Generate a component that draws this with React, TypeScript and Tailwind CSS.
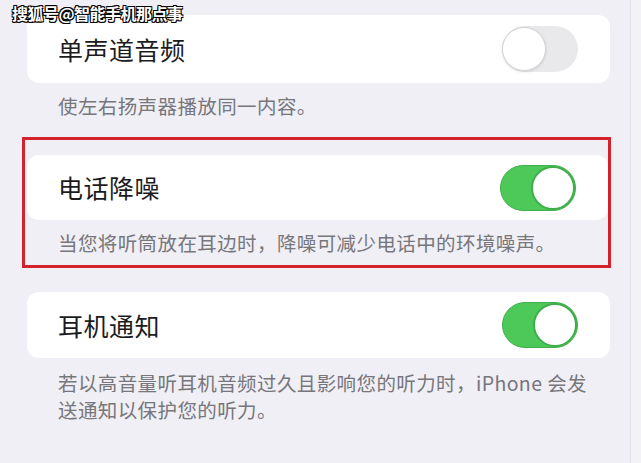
const Toggle = ({ on }: { on: boolean }) => (
  <div
    className={`relative h-[46px] w-[76px] shrink-0 rounded-full ${
      on ? "border border-[#3fae4a] bg-[#4dc95a]" : "bg-[#e9e9ec]"
    }`}
  >
    <div
      className={`absolute top-[0px] h-[44px] w-[44px] rounded-full bg-white ${
        on
          ? "right-[0px] border-2 border-[#3fae4a]"
          : "left-0 top-[1px] border border-[#d4d4d8] shadow-[0_1px_3px_rgba(0,0,0,0.12)]"
      }`}
    />
  </div>
);

const SettingCard = ({
  title,
  on,
  height,
}: {
  title: string;
  on: boolean;
  height: string;
}) => (
  <div
    className={`flex ${height} w-full items-center justify-between rounded-[12px] bg-white pl-[31px] pr-[32px]`}
  >
    <p className="text-[25px] leading-none tracking-[0.5px] text-[#1c1c1e]">
      {title}
    </p>
    <Toggle on={on} />
  </div>
);

const App = () => {
  return (
    <div className="relative flex h-[463px] w-[641px] overflow-hidden bg-[#f0eff5] font-['Noto_Sans_CJK_SC','Noto_Sans',sans-serif]">
      {/* watermark */}
      <p className="absolute left-[12px] top-[1px] text-[16px] font-bold tracking-[-0.5px] text-white [text-shadow:1px_1px_0_#000,-1px_-1px_0_#000,1px_-1px_0_#000,-1px_1px_0_#000,0_1px_0_#000,0_-1px_0_#000]">
        搜狐号@智能手机那点事
      </p>

      <div className="w-[630px] shrink-0 pt-[15px]">
        {/* mono audio */}
        <div className="ml-[27px] w-[583px]">
          <SettingCard title="单声道音频" on={false} height="h-[68px]" />
          <p className="mt-[9px] pl-[31px] text-[19.5px] leading-[27px] tracking-[0.4px] text-[#76767b]">
            使左右扬声器播放同一内容。
          </p>
        </div>

        {/* phone noise cancellation, highlighted */}
        <div className="ml-[22px] mt-[18px] w-[589px] border-[3px] border-[#d3222b] pb-[9px] pl-[2px] pt-[15px]">
          <SettingCard title="电话降噪" on={true} height="h-[65px]" />
          <p className="mt-[9px] pl-[31px] text-[19.5px] leading-[27px] tracking-[0.4px] text-[#76767b]">
            当您将听筒放在耳边时，降噪可减少电话中的环境噪声。
          </p>
        </div>

        {/* headphone notifications */}
        <div className="ml-[27px] mt-[24px] w-[583px]">
          <SettingCard title="耳机通知" on={true} height="h-[66px]" />
          <p className="mt-[11px] w-[562px] pl-[31px] text-[19.5px] leading-[27px] tracking-[0.4px] text-[#76767b]">
            若以高音量听耳机音频过久且影响您的听力时，iPhone 会发送通知以保护您的听力。
          </p>
        </div>
      </div>

      <div className="flex-1 border-l border-[#e2e1e8] bg-[#f3f2f7]" />
    </div>
  );
};

export default App;
